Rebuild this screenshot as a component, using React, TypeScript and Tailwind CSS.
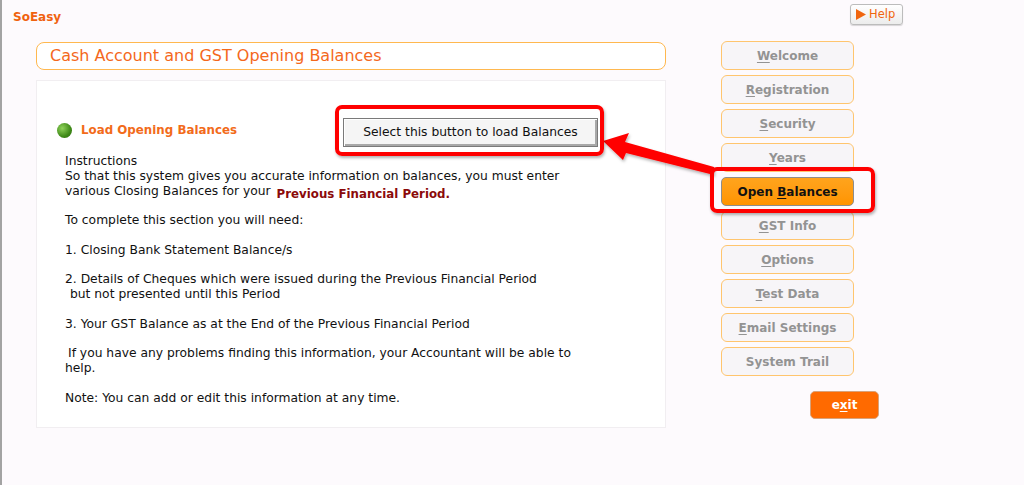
const navItems = [
  { key: "W", rest: "elcome" },
  { key: "R", rest: "egistration" },
  { key: "S", rest: "ecurity" },
  { key: "Y", rest: "ears" },
  { key: "", rest: "Open Balances", active: true },
  { key: "G", rest: "ST Info" },
  { key: "O", rest: "ptions" },
  { key: "T", rest: "est Data" },
  { key: "E", rest: "mail Settings" },
  { key: "", rest: "System Trail" },
];

function NavButton({ item }: { item: (typeof navItems)[number] }) {
  if (item.active) {
    return (
      <button className="h-[29px] w-full rounded-[5px] border border-[#8d8d8d] bg-gradient-to-b from-[#ffa41c] to-[#ff9400] text-[12px] font-bold text-[#111]">
        Open <u className="underline-offset-2">B</u>alances
      </button>
    );
  }
  return (
    <button className="h-[29px] w-full rounded-[6px] border border-[#ffc56e] bg-[#f7f5f8] text-[12px] font-bold text-[#939393]">
      {item.key && <u className="underline-offset-2">{item.key}</u>}
      {item.rest}
    </button>
  );
}

function Line({ children, className = "" }: { children?: React.ReactNode; className?: string }) {
  return <div className={`h-[14.8px] whitespace-pre ${className}`}>{children}</div>;
}

export default function App() {
  return (
    <div
      className="relative h-[485px] w-[1024px] overflow-hidden border-l-2 border-[#a3a3a3] bg-[#fdfafd]"
      style={{ fontFamily: '"DejaVu Sans", Verdana, sans-serif' }}
    >
      {/* header */}
      <div className="flex h-[42px] items-start">
        <div className="pl-[11px] pt-[9px] text-[12px] font-bold leading-[16px] text-[#f0620f]">SoEasy</div>
        <button className="ml-auto mr-[121px] mt-[4px] flex h-[21px] w-[53px] items-center gap-[3px] rounded-[3px] border border-[#bcbcbc] bg-gradient-to-b from-white to-[#ececec] pl-[5px] text-[11.5px] text-[#f0650f] shadow-[0_1px_1px_rgba(0,0,0,0.15)]">
          <svg width="10" height="11" viewBox="0 0 10 11">
            <path d="M0 0 L10 5.5 L0 11 Z" fill="#f0650f" />
          </svg>
          Help
        </button>
      </div>

      <div className="flex items-start pl-[34px]">
        {/* left column */}
        <div className="w-[630px]">
          <div className="flex h-[28px] items-center rounded-[8px] border border-[#ffb84f] bg-white pl-[13px] text-[16px] text-[#f4681c]">
            Cash Account and GST Opening Balances
          </div>

          <div className="mt-[10px] h-[348px] border border-[#f1eef1] bg-white pt-[37px]">
            <div className="flex h-[29px] items-center pl-[20px]">
              <div className="flex w-[286px] items-center pb-[4px]">
                <div className="h-[15px] w-[15px] rounded-full bg-[radial-gradient(circle_at_35%_35%,#8fd25a,#3f8a18_60%,#2c6a0c)]" />
                <span className="ml-[9px] text-[11.85px] font-bold text-[#f26b1a]">Load Opening Balances</span>
              </div>
              <button className="h-[29px] w-[255px] border border-[#7a7a7a] bg-[#f5f5f5] text-[12.3px] text-[#111] shadow-[inset_1px_1px_0_#ffffff,inset_-2px_-2px_0_#a8a8a8]">
                Select this button to load Balances
              </button>
            </div>

            <div className="mt-[7px] pl-[28px] text-[12.3px] leading-[14.8px] text-[#111]">
              <Line>Instructions</Line>
              <Line>So that this system gives you accurate information on balances, you must enter</Line>
              <Line>
                various Closing Balances for your
                <span className="ml-[6px] align-[-3px] text-[11.8px] font-bold text-[#8b0a0a]">Previous Financial Period.</span>
              </Line>
              <Line />
              <Line>To complete this section you will need:</Line>
              <Line />
              <Line>1. Closing Bank Statement Balance/s</Line>
              <Line />
              <Line>2. Details of Cheques which were issued during the Previous Financial Period</Line>
              <Line className="pl-[5px]">but not presented until this Period</Line>
              <Line />
              <Line>3. Your GST Balance as at the End of the Previous Financial Period</Line>
              <Line />
              <Line className="pl-[3px]">If you have any problems finding this information, your Accountant will be able to</Line>
              <Line>help.</Line>
              <Line />
              <Line>Note: You can add or edit this information at any time.</Line>
            </div>
          </div>
        </div>

        {/* navigation */}
        <div className="-mt-[1px] ml-[55px] w-[133px]">
          <div className="flex flex-col gap-[5px]">
            {navItems.map((item) => (
              <NavButton key={item.rest} item={item} />
            ))}
          </div>
          <button className="ml-[89px] mt-[15px] h-[28px] w-[69px] rounded-[5px] border border-[#d8a27a] bg-[#ff6a00] text-[12px] font-bold text-white">
            e<u className="underline-offset-2">x</u>it
          </button>
        </div>
      </div>

      {/* annotations */}
      <svg className="absolute left-[596px] top-[125px] overflow-visible" width="125" height="60" viewBox="0 0 125 60">
        <defs>
          <filter id="sh" x="-20%" y="-40%" width="140%" height="180%">
            <feDropShadow dx="1" dy="2" stdDeviation="1.5" floodColor="#000" floodOpacity="0.3" />
          </filter>
        </defs>
        <polygon points="5,16 31,8 27,17 116,42 116,50 28,28 25,35" fill="#ff0000" filter="url(#sh)" />
      </svg>
      <div className="pointer-events-none absolute left-[333px] top-[105px] h-[51px] w-[269px] rounded-[7px] border-4 border-[#ff0000] shadow-[1px_2px_3px_rgba(0,0,0,0.3)]" />
      <div className="pointer-events-none absolute left-[708px] top-[167px] h-[46px] w-[165px] rounded-[7px] border-4 border-[#ff0000] shadow-[1px_2px_3px_rgba(0,0,0,0.3)]" />
    </div>
  );
}
